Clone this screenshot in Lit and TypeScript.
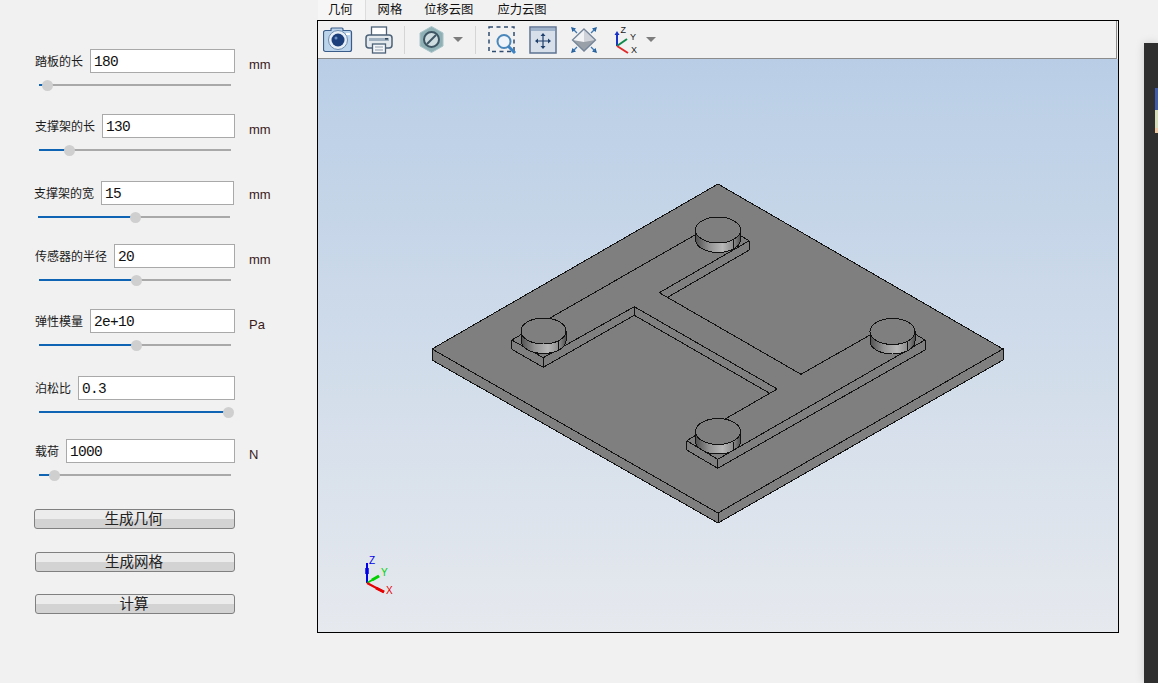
import { css, html, svg, LitElement } from "lit";
import { customElement } from "lit/decorators.js";

const params = [
    { label: "踏板的长", value: "180", unit: "mm", pos: 4.2, top: 0, dx: 0, unitTop: 7, unitGap: 14 },
    { label: "支撑架的长", value: "130", unit: "mm", pos: 15.6, top: 27, dx: 0, unitTop: 7, unitGap: 14 },
    { label: "支撑架的宽", value: "15", unit: "mm", pos: 50.5, top: 29, dx: -1, unitTop: 3, unitGap: 15 },
    { label: "传感器的半径", value: "20", unit: "mm", pos: 50.5, top: 25, dx: 0, unitTop: 7, unitGap: 14 },
    { label: "弹性模量", value: "2e+10", unit: "Pa", pos: 50.5, top: 27, dx: 0, unitTop: 7, unitGap: 14 },
    { label: "泊松比", value: "0.3", unit: "", pos: 98.4, top: 29, dx: 0, unitTop: 7, unitGap: 14 },
    { label: "载荷", value: "1000", unit: "N", pos: 7.8, top: 25, dx: 0, unitTop: 7, unitGap: 14 },
];

const tabs = ["几何", "网格", "位移云图", "应力云图"];

// x, y, rx, ry, height of the sensor cylinders
const cylinders = [
    [718, 230, 22.5, 13, 9.5],
    [543.5, 331, 22.5, 13, 9.5],
    [892.5, 331.5, 22.5, 13, 9.5],
    [718, 431.5, 22.5, 13, 9.5],
];

const edges = [
    // left pad
    [511.7, 340, 523, 333.5], [511.7, 340, 543.3, 357.7], [511.7, 340, 511.7, 349.3],
    [511.7, 349.3, 543.3, 367.3], [543.3, 357.7, 543.3, 367.3],
    // inner corner of the left arm
    [543.3, 357.7, 634.3, 306.7], [543.3, 367.3, 634.3, 315.3], [634.3, 306.7, 634.3, 315.3],
    [634.3, 306.7, 777.3, 389], [634.3, 315.3, 770, 393.5], [777.3, 389, 725, 419],
    // upper arm
    [550, 318, 695, 235], [659.3, 292.7, 749.3, 240.7], [667.7, 297.3, 749.3, 250],
    [749.3, 240.7, 749.3, 250], [749.3, 240.7, 739, 235],
    [659.3, 292.7, 801, 374.3], [801, 374.3, 870, 335],
    // lower pad
    [925, 340, 915, 334], [925, 340, 925, 350], [925, 340, 717.7, 459.3], [925, 350, 717.7, 468.3],
    [686.7, 440.7, 717.7, 459.3], [686.7, 440.7, 686.7, 450], [686.7, 450, 717.7, 468.3],
    [717.7, 459.3, 717.7, 468.3], [686.7, 440.7, 698, 434],
];

@customElement("app-root")
class AppRoot extends LitElement {
    renderModel() {
        return html`
      <svg class="model" viewBox="318 59 800 573">
        <defs>
          <linearGradient id="cyl">
            <stop offset="0" stop-color="#4f4f4f"></stop>
            <stop offset="0.3" stop-color="#929292"></stop>
            <stop offset="0.6" stop-color="#b8b8b8"></stop>
            <stop offset="0.85" stop-color="#8a8a8a"></stop>
            <stop offset="1" stop-color="#505050"></stop>
          </linearGradient>
        </defs>
        <g shape-rendering="crispEdges" stroke="#111" stroke-width="1" fill="#7f7f7f">
          <polygon points="432,349 718,513 1003,349 1003,360 718,523 432,360"></polygon>
          <polygon points="718,184 1003,349 718,513 432,349"></polygon>
          <line x1="718" y1="513" x2="718" y2="523"></line>
          ${edges.map(
            (e) => svg`<line x1=${e[0]} y1=${e[1]} x2=${e[2]} y2=${e[3]}></line>`
        )}
          ${cylinders.map(
            ([x, y, rx, ry, h]) => svg`
            <path fill="url(#cyl)" d="M${x - rx} ${y}V${y + h}A${rx} ${ry} 0 0 0 ${x + rx} ${y + h}V${y}Z"></path>
            <line x1=${x + 15} y1=${y + 10} x2=${x + 15} y2=${y + 19}></line>
            <ellipse cx=${x} cy=${y} rx=${rx} ry=${ry}></ellipse>`
        )}
        </g>
        <g class="triad">
          <line x1="367" y1="583" x2="367" y2="563" stroke="#0000e6" stroke-width="2"></line>
          <line x1="367" y1="574" x2="367" y2="568" stroke="#0000e6" stroke-width="3.5"></line>
          <line x1="367" y1="583" x2="379" y2="576" stroke="#00d000" stroke-width="2"></line>
          <line x1="372" y1="580" x2="379" y2="576" stroke="#00d000" stroke-width="3"></line>
          <line x1="367" y1="583" x2="384" y2="592" stroke="#e60000" stroke-width="2"></line>
          <line x1="376" y1="588" x2="384" y2="592" stroke="#e60000" stroke-width="3"></line>
          <text x="369" y="564" fill="#0000e6">Z</text>
          <text x="381" y="576" fill="#00d000">Y</text>
          <text x="386" y="593.5" fill="#e60000">X</text>
        </g>
      </svg>`;
    }

    renderToolbar() {
        return html`
      <div class="toolbar">
        <svg class="camera" width="30" height="26" viewBox="0 0 30 26">
          <path d="M8 3.5V2a1 1 0 0 1 1-1h10a1 1 0 0 1 1 1v1.5h6.5a2 2 0 0 1 2 2v17a2 2 0 0 1-2 2h-24a2 2 0 0 1-2-2v-17a2 2 0 0 1 2-2z" fill="#bcd3ec" stroke="#3a5c88" stroke-width="1.2"></path>
          <circle cx="15" cy="13" r="9.5" fill="#e8eef5" stroke="#6f8db0"></circle>
          <circle cx="15" cy="13" r="6.5" fill="#1c3f7c"></circle>
          <circle cx="13" cy="11" r="1.5" fill="#6d8fc4"></circle>
          <rect x="23" y="6" width="4" height="2" fill="#fff"></rect>
        </svg>
        <svg class="printer" width="28" height="28" viewBox="0 0 28 28">
          <rect x="6.5" y="1" width="15" height="9" fill="#fff" stroke="#4c6278" stroke-width="1.3"></rect>
          <rect x="1" y="9" width="26" height="13" rx="3" fill="#e4e9ee" stroke="#4c6278" stroke-width="1.5"></rect>
          <rect x="4" y="12" width="20" height="3" fill="#9fb0c0"></rect>
          <rect x="20" y="12" width="3" height="1.6" fill="#34495e"></rect>
          <rect x="7.5" y="18" width="13" height="9" fill="#f4f6f8" stroke="#4c6278" stroke-width="1.3"></rect>
          <path d="M10 21h8M10 24h8" stroke="#8d9dac"></path>
        </svg>
        <i class="sep first"></i>
        <svg class="hex" width="25" height="27" viewBox="0 0 25 27">
          <polygon points="12.5,0.5 24,7 24,20 12.5,26.5 1,20 1,7" fill="#8fb1b6" stroke="#a9c4c8"></polygon>
          <circle cx="12.5" cy="13.5" r="7.5" fill="#cfdce0" stroke="#3e5663" stroke-width="2"></circle>
          <line x1="8" y1="18" x2="17" y2="9" stroke="#3e5663" stroke-width="2"></line>
        </svg>
        <span class="caret c1"></span>
        <i class="sep second"></i>
        <svg class="zoom" width="28" height="28" viewBox="0 0 28 28">
          <rect x="1" y="1" width="25" height="24.5" fill="none" stroke="#2f4b6f" stroke-width="1.5" stroke-dasharray="4 3.5"></rect>
          <circle cx="16" cy="15.5" r="6.5" fill="#eef4f9" stroke="#4a87ba" stroke-width="2"></circle>
          <line x1="20.5" y1="20.5" x2="27" y2="27" stroke="#3b83c2" stroke-width="3"></line>
        </svg>
        <svg class="pan" width="28" height="28" viewBox="0 0 28 28">
          <rect x="1" y="1" width="26" height="26" fill="#d7dfea" stroke="#5d7392" stroke-width="1.5"></rect>
          <rect x="2" y="2" width="24" height="3" fill="#9eb2ca"></rect>
          <path d="M14 9v12M8 15h12" stroke="#1f3f6d" stroke-width="1.2"></path>
          <path d="M14 7l2.5 3h-5zM14 23l2.5-3h-5zM6 15l3-2.5v5zM22 15l-3-2.5v5z" fill="#1f3f6d"></path>
        </svg>
        <svg class="fit" width="28" height="28" viewBox="0 0 28 28">
          <polygon points="14,3 25.5,14 14,25" fill="#d0d4da"></polygon>
          <polygon points="14,3 2.5,14 14,25" fill="#f2f3f5"></polygon>
          <polygon points="2.5,14 14,25 25.5,14 14,16" fill="#9aa0a8"></polygon>
          <polygon points="14,3 25.5,14 14,25 2.5,14" fill="none" stroke="#74859a" stroke-width="1.3"></polygon>
          <path d="M1 1l5 1.5-3.5 3.5zM27 1l-5 1.5 3.5 3.5zM1 27l5-1.5-3.5-3.5zM27 27l-5-1.5 3.5-3.5z" fill="#1f5c9a"></path>
          <path d="M3 3l4 4M25 3l-4 4M3 25l4-4M25 25l-4-4" stroke="#3f77b0" stroke-width="1.3"></path>
        </svg>
        <svg class="axes" width="26" height="28" viewBox="0 0 26 28">
          <line x1="4" y1="20" x2="4" y2="8" stroke="#1733c8" stroke-width="2"></line>
          <path d="M4 5l2.5 4h-5z" fill="#1733c8"></path>
          <line x1="4" y1="20" x2="14" y2="13" stroke="#0d8a4a" stroke-width="2"></line>
          <line x1="4" y1="20" x2="15" y2="27" stroke="#e02a2a" stroke-width="2"></line>
          <text x="7.5" y="6.5">Z</text>
          <text x="17" y="13.5">Y</text>
          <text x="18" y="27">X</text>
        </svg>
        <span class="caret c2"></span>
      </div>`;
    }

    render() {
        return html`
      <div class="panel">
        ${params.map(
            (p) => html`
          <div class="param" style="margin-top:${p.top}px;margin-left:${35 + p.dx}px">
            <div class="head">
              <label>${p.label}</label>
              <input type="text" .value=${p.value} />
              <span class="unit" style="width:${36 - p.unitGap}px;padding-top:${p.unitTop}px;margin-left:${p.unitGap}px">${p.unit}</span>
            </div>
            <div class="slider">
              <div class="fill" style="width:${p.pos}%"></div>
              <div class="thumb" style="left:${p.pos}%"></div>
            </div>
          </div>`
        )}
        <button class="b1">生成几何</button>
        <button class="b2">生成网格</button>
        <button class="b3">计算</button>
      </div>
      <div class="main">
        <div class="tabs">
          ${tabs.map(
            (t, i) => html`<span class=${i === 0 ? "tab active" : "tab"}>${t}</span>`
        )}
        </div>
        <div class="viewer">
          ${this.renderToolbar()}
          <div class="canvas">${this.renderModel()}</div>
        </div>
      </div>
      <div class="behind">
        <div class="sliver"></div>
      </div>
    `;
    }

    static styles = css`
    :host {
        display: flex;
        width: 1158px;
        height: 683px;
        overflow: hidden;
        background: #f1f1f1;
        font-family: "Noto Sans CJK SC", sans-serif;
        color: #1a1a1a;
    }

    .panel {
        width: 317px;
        flex: none;
        padding-top: 49px;
        box-sizing: border-box;
    }

    .param {
        width: 236px;
        height: 38px;
    }

    .head {
        display: flex;
        height: 24px;
        align-items: center;
    }

    label {
        font-size: 12px;
        line-height: 24px;
        margin-right: 7px;
        white-space: nowrap;
    }

    input {
        flex: 1;
        min-width: 0;
        height: 24px;
        box-sizing: border-box;
        border: 1px solid #a9a9a9;
        background: #fff;
        padding: 1px 3px 0;
        margin: 0;
        outline: none;
        font-family: "Liberation Mono", monospace;
        font-size: 14.5px;
        letter-spacing: -0.7px;
        color: #111;
    }

    .unit {
        flex: none;
        font-family: "Liberation Sans", sans-serif;
        font-size: 13px;
        color: #3a1a1a;
    }

    .slider {
        position: relative;
        width: 192px;
        height: 2px;
        margin: 11px 0 0 4px;
        background: #a9a9a9;
    }

    .fill {
        height: 2px;
        background: #0f64b4;
    }

    .thumb {
        position: absolute;
        top: -4px;
        width: 11px;
        height: 11px;
        margin-left: -5px;
        border-radius: 50%;
        background: #cfcfcf;
    }

    button {
        display: block;
        width: 200px;
        height: 20px;
        margin-left: 35px;
        padding: 0 2px 2px 0;
        box-sizing: border-box;
        border: 1px solid #808080;
        border-radius: 3px;
        background: linear-gradient(#ececec 50%, #d3d3d3 50%);
        font-family: "Noto Sans CJK SC", sans-serif;
        font-size: 14.5px;
        line-height: 16px;
        color: #222;
    }

    .b1 {
        margin-top: 32px;
        margin-left: 34px;
        width: 201px;
    }

    .b2 {
        margin-top: 23px;
    }

    .b3 {
        margin-top: 22px;
    }

    .main {
        width: 802px;
        flex: none;
    }

    .tabs {
        display: flex;
        height: 20px;
        padding-left: 1px;
    }

    .tab {
        padding: 0 11px;
        font-size: 12.3px;
        line-height: 19px;
        color: #111;
    }

    .tab:last-child {
        margin-left: 2px;
    }

    .tab.active {
        padding: 0 12px 0 10px;
        background: #f6f6f6;
        border-right: 1px solid #dcdcdc;
        margin-right: 1px;
    }

    .viewer {
        height: 613px;
        box-sizing: border-box;
        border: 1px solid #000;
        display: flex;
        flex-direction: column;
    }

    .toolbar {
        display: flex;
        align-items: center;
        height: 38px;
        flex: none;
        box-sizing: border-box;
        margin-right: 1px;
        border-right: 1px solid #8c8c8c;
        border-bottom: 1px solid #8c8c8c;
        background: #f1f1f1;
    }

    .toolbar svg {
        flex: none;
        font-family: "Liberation Sans", sans-serif;
        font-size: 9px;
        fill: #222;
    }

    .camera {
        margin-left: 5px;
    }

    .printer {
        margin-left: 12px;
    }

    .sep {
        width: 1px;
        height: 28px;
        background: #d5d5d5;
    }

    .sep.first {
        margin-left: 11px;
    }

    .hex {
        margin-left: 14px;
    }

    .caret {
        width: 0;
        height: 0;
        border-left: 5px solid transparent;
        border-right: 5px solid transparent;
        border-top: 5px solid #7d7d7d;
    }

    .caret.c1 {
        margin-left: 9px;
    }

    .sep.second {
        margin-left: 12px;
    }

    .zoom {
        margin-left: 12px;
    }

    .pan {
        margin-left: 13px;
    }

    .fit {
        margin-left: 13px;
    }

    .axes {
        margin-left: 15px;
    }

    .caret.c2 {
        margin-left: 7px;
    }

    .canvas {
        flex: 1;
        min-height: 0;
        background: linear-gradient(#b9cee6, #e6e9ee);
    }

    .model {
        display: block;
        width: 100%;
        height: 100%;
    }

    .triad text {
        font-family: "Liberation Sans", sans-serif;
        font-size: 10px;
    }

    .behind {
        flex: none;
        width: 14px;
        height: 640px;
        margin: 43px 0 0 25px;
        background: #2f2f2f;
        box-shadow: 0 0 10px rgba(0, 0, 0, 0.15);
        padding: 45px 0 0 11px;
        box-sizing: border-box;
    }

    .sliver {
        width: 3px;
        height: 45px;
        background: linear-gradient(#3f5cab 49%, #d5dcb8 49%, #d5dcb8 89%, #f0c8a0 89%);
    }
  `;
}
